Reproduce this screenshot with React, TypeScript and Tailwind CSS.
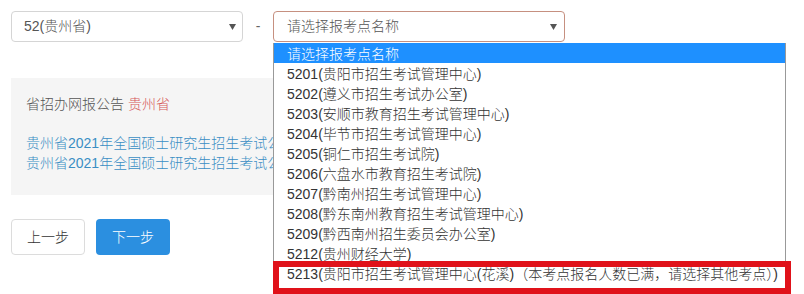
import { useState } from 'react';

const options = [
  '请选择报考点名称',
  '5201(贵阳市招生考试管理中心)',
  '5202(遵义市招生考试办公室)',
  '5203(安顺市教育招生考试管理中心)',
  '5204(毕节市招生考试管理中心)',
  '5205(铜仁市招生考试院)',
  '5206(六盘水市教育招生考试院)',
  '5207(黔南州招生考试管理中心)',
  '5208(黔东南州教育招生考试管理中心)',
  '5209(黔西南州招生委员会办公室)',
  '5212(贵州财经大学)',
  '5213(贵阳市招生考试管理中心(花溪)（本考点报名人数已满，请选择其他考点）)',
];

function Caret() {
  return (
    <svg width="7" height="6" viewBox="0 0 7 6" className="shrink-0">
      <path d="M0 0 L7 0 L3.5 6 Z" fill="#555" />
    </svg>
  );
}

export default function App() {
  const [active] = useState(0);

  return (
    <div className="relative w-[804px] h-[294px] overflow-hidden bg-white text-[14px] font-light font-['Liberation_Sans','Noto_Sans_CJK_SC',sans-serif]">
      <div className="pl-[11px] pt-[11px] w-[565px]">
        <div className="flex items-center h-[31px]">
          <div className="flex items-center justify-between w-[232px] h-full pl-[12px] pr-[6px] border border-[#d5d5d5] rounded-[4px] text-[#555]">
            <span>52(贵州省)</span>
            <Caret />
          </div>
          <span className="w-[30px] text-center text-[#666]">-</span>
          <div className="flex items-center justify-between w-[292px] h-full pl-[13px] pr-[7px] border border-[#c69080] rounded-[4px] text-[#555]">
            <span>请选择报考点名称</span>
            <Caret />
          </div>
        </div>

        <div className="mt-[36px] h-[117px] bg-[#f5f5f5] pl-[15px] pt-[16px]">
          <div className="leading-[20px] text-[#555]">
            省招办网报公告 <span className="text-[#d65a5a]">贵州省</span>
          </div>
          <div className="mt-[19px] leading-[20px] text-[#3a8ec4] whitespace-nowrap">
            <div>贵州省2021年全国硕士研究生招生考试公告</div>
            <div>贵州省2021年全国硕士研究生招生考试公告</div>
          </div>
        </div>

        <div className="mt-[24px] flex gap-[11px]">
          <button className="w-[74px] h-[36px] border border-[#dcdcdc] rounded-[4px] bg-white text-[#333]">
            上一步
          </button>
          <button className="w-[74px] h-[36px] rounded-[4px] bg-[#2b8fe0] text-white">
            下一步
          </button>
        </div>
      </div>

      <ul className="absolute left-[273px] top-[43px] w-[513px] bg-white border-x border-[#999] text-[#333]">
        {options.map((o, i) => (
          <li
            key={o}
            className={`h-[20px] leading-[22px] pl-[13px] whitespace-nowrap ${
              i === active ? 'bg-[#1e90ff] text-white' : ''
            }`}
          >
            {o}
          </li>
        ))}
      </ul>

      <div className="absolute left-[273px] top-[261px] w-[518px] h-[33px] border-[6px] border-[#e0121a]" />
    </div>
  );
}
